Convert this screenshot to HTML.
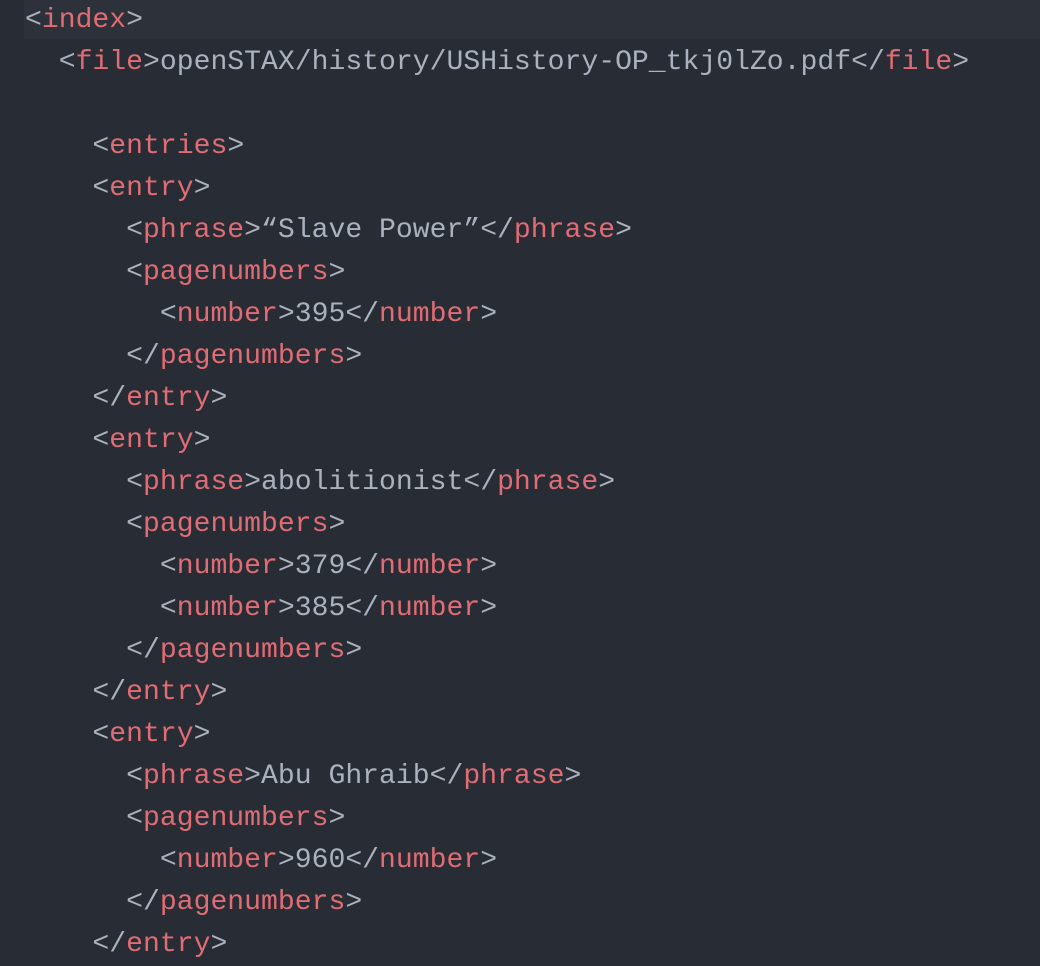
<!DOCTYPE html>
<html><head><meta charset="utf-8"><style>
html,body{margin:0;padding:0;background:#282c34;width:1040px;height:966px;overflow:hidden}
.hl{position:absolute;left:24px;top:0;width:1016px;height:39px;background:#2c313a}
pre{position:absolute;left:25px;top:0px;margin:0;font-family:"Liberation Mono",monospace;font-size:28.1px;line-height:42px;color:#abb2bf;white-space:pre}
.t{color:#e06c75}
</style></head><body>
<div class="hl"></div>
<pre>&lt;<span class="t">index</span>&gt;
  &lt;<span class="t">file</span>&gt;openSTAX/history/USHistory-OP_tkj0lZo.pdf&lt;/<span class="t">file</span>&gt;

    &lt;<span class="t">entries</span>&gt;
    &lt;<span class="t">entry</span>&gt;
      &lt;<span class="t">phrase</span>&gt;“Slave Power”&lt;/<span class="t">phrase</span>&gt;
      &lt;<span class="t">pagenumbers</span>&gt;
        &lt;<span class="t">number</span>&gt;395&lt;/<span class="t">number</span>&gt;
      &lt;/<span class="t">pagenumbers</span>&gt;
    &lt;/<span class="t">entry</span>&gt;
    &lt;<span class="t">entry</span>&gt;
      &lt;<span class="t">phrase</span>&gt;abolitionist&lt;/<span class="t">phrase</span>&gt;
      &lt;<span class="t">pagenumbers</span>&gt;
        &lt;<span class="t">number</span>&gt;379&lt;/<span class="t">number</span>&gt;
        &lt;<span class="t">number</span>&gt;385&lt;/<span class="t">number</span>&gt;
      &lt;/<span class="t">pagenumbers</span>&gt;
    &lt;/<span class="t">entry</span>&gt;
    &lt;<span class="t">entry</span>&gt;
      &lt;<span class="t">phrase</span>&gt;Abu Ghraib&lt;/<span class="t">phrase</span>&gt;
      &lt;<span class="t">pagenumbers</span>&gt;
        &lt;<span class="t">number</span>&gt;960&lt;/<span class="t">number</span>&gt;
      &lt;/<span class="t">pagenumbers</span>&gt;
    &lt;/<span class="t">entry</span>&gt;</pre>
</body></html>
